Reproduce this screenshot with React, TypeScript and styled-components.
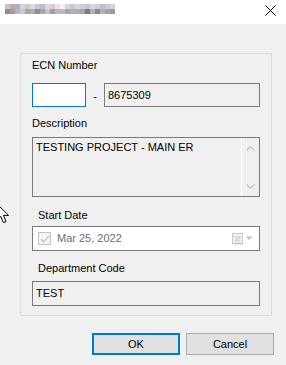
import styled, { createGlobalStyle } from 'styled-components';

const GlobalStyle = createGlobalStyle`
  html, body {
    margin: 0;
    padding: 0;
    background: #f0f0f0;
  }
  body {
    font-family: "Liberation Sans", Arial, sans-serif;
    font-size: 11px;
    color: #000;
  }
`;

const Window = styled.div`
  position: relative;
  width: 286px;
  height: 365px;
  display: flex;
  flex-direction: column;
  overflow: hidden;
  background: #f0f0f0;
`;

const TitleBar = styled.div`
  height: 24px;
  background: #fff;
  display: flex;
  align-items: flex-start;
  justify-content: space-between;
  padding: 3px 10px 0 5px;
  box-sizing: border-box;
`;

const Content = styled.div`
  padding: 29px 14px 0 20px;
`;

const GroupBox = styled.div`
  border: 1px solid #dcdcdc;
  height: 263px;
  box-sizing: border-box;
  padding: 5px 11px 0 11px;
  display: flex;
  flex-direction: column;
`;

const Label = styled.div<{ $indent?: number; $top: number }>`
  line-height: 13px;
  height: 13px;
  margin-top: ${(p) => p.$top}px;
  padding-left: ${(p) => p.$indent ?? 0}px;
  white-space: nowrap;
`;

const EcnRow = styled.div`
  display: flex;
  align-items: center;
  height: 24px;
  margin-top: 11px;
`;

const TextBox = styled.div<{ $width?: number; $height?: number; $focused?: boolean; $white?: boolean }>`
  box-sizing: border-box;
  width: ${(p) => (p.$width ? `${p.$width}px` : 'auto')};
  flex: ${(p) => (p.$width ? '0 0 auto' : '1 1 auto')};
  height: ${(p) => p.$height ?? 25}px;
  border: 1px solid ${(p) => (p.$focused ? '#0078d7' : '#7a7a7a')};
  background: ${(p) => (p.$white ? '#fff' : '#f0f0f0')};
  padding: 0 3px;
  display: flex;
  align-items: center;
  line-height: 13px;
  white-space: nowrap;
`;

const Dash = styled.span`
  width: 18px;
  text-align: center;
  line-height: 13px;
  padding-top: 2px;
`;

const TextArea = styled.div`
  box-sizing: border-box;
  height: 60px;
  margin-top: 7px;
  border: 1px solid #7a7a7a;
  background: #f0f0f0;
  display: flex;
`;

const AreaText = styled.div`
  flex: 1;
  padding: 3px 3px 0 3px;
  line-height: 13px;
  white-space: nowrap;
`;

const ScrollBar = styled.div`
  width: 17px;
  border-left: 1px solid #fff;
  display: flex;
  flex-direction: column;
  align-items: center;
  justify-content: space-between;
  padding: 8px 0 7px;
`;

const DatePicker = styled.div`
  box-sizing: border-box;
  height: 25px;
  margin-top: 4px;
  border: 1px solid #7a7a7a;
  background: #fff;
  display: flex;
  align-items: center;
  padding: 0 5px 0 5px;
`;

const CheckBox = styled.div`
  box-sizing: border-box;
  width: 13px;
  height: 13px;
  border: 1px solid #c4c4c4;
  background: #f4f4f4;
  display: flex;
  align-items: center;
  justify-content: center;
`;

const DateText = styled.span`
  margin-left: 6px;
  color: #6d6d7d;
  flex: 1;
  line-height: 13px;
`;

const Buttons = styled.div`
  display: flex;
  justify-content: flex-end;
  gap: 6px;
  padding: 17px 12px 0 0;
`;

const Button = styled.div<{ $default?: boolean }>`
  box-sizing: border-box;
  width: 88px;
  height: 22px;
  background: #e1e1e1;
  border: ${(p) => (p.$default ? '2px solid #0078d7' : '1px solid #adadad')};
  display: flex;
  align-items: center;
  justify-content: center;
  line-height: 13px;
`;

const Cursor = styled.svg`
  position: absolute;
  left: -4px;
  top: 203px;
`;

const mosaic = [
  ['#c9c3cc', '#b8a9b4', '#aeb3c4', '#d4d6da', '#c4ccd0', '#dcdcdc', '#c9c2cf', '#bfb8c9', '#ddd8de', '#d6cfd8', '#e6e2e6', '#f2f0f2', '#dad6d9', '#ccc8cf', '#d8d4d8', '#cfcbd2', '#c7c4cc', '#d9d7da', '#d2cdd5', '#c2bcc4', '#ccc8cc', '#d6d4d9'],
  ['#8f8a9c', '#a59aa8', '#b5b8bd', '#c8ccc8', '#a6a4a4', '#b5aba2', '#8e8c9c', '#aaa4b2', '#c7c0cb', '#a39aaf', '#bcb7bf', '#c9b3b8', '#a6a3ad', '#b5b2b9', '#a6b0c4', '#aaa6ae', '#7b7886', '#b4afb6', '#8f86a0', '#b7b0b8', '#a49eae', '#9d97ab'],
];

const App = () => {
  return (
    <>
      <GlobalStyle />
      <Window>
        <TitleBar>
          <svg width="110" height="11" viewBox="0 0 110 11">
            {mosaic.map((row, r) =>
              row.map((c, i) => <rect key={`${r}-${i}`} x={i * 5} y={r * 5 + 1} width="5" height="5" fill={c} />)
            )}
            <rect x="10" y="11" width="5" height="0" fill="#eee" />
          </svg>
          <svg width="11" height="11" viewBox="0 0 11 11" style={{ marginTop: 2 }}>
            <path d="M0.5 0.5 L10.5 10.5 M10.5 0.5 L0.5 10.5" stroke="#000" strokeWidth="1" />
          </svg>
        </TitleBar>
        <Content>
          <GroupBox>
            <Label $top={0}>ECN Number</Label>
            <EcnRow>
              <TextBox $width={54} $height={24} $focused $white />
              <Dash>-</Dash>
              <TextBox $height={24}>8675309</TextBox>
            </EcnRow>
            <Label $top={10}>Description</Label>
            <TextArea>
              <AreaText>TESTING PROJECT - MAIN ER</AreaText>
              <ScrollBar>
                <svg width="9" height="5" viewBox="0 0 9 5">
                  <path d="M0.5 4.5 L4.5 0.8 L8.5 4.5" fill="none" stroke="#c8c8c8" strokeWidth="1.4" />
                </svg>
                <svg width="9" height="5" viewBox="0 0 9 5">
                  <path d="M0.5 0.5 L4.5 4.2 L8.5 0.5" fill="none" stroke="#c8c8c8" strokeWidth="1.4" />
                </svg>
              </ScrollBar>
            </TextArea>
            <Label $top={12} $indent={6}>Start Date</Label>
            <DatePicker>
              <CheckBox>
                <svg width="10" height="8" viewBox="0 0 10 8">
                  <path d="M1 4 L3.8 6.8 L9 1" fill="none" stroke="#c4c4c4" strokeWidth="1.2" />
                </svg>
              </CheckBox>
              <DateText>Mar 25, 2022</DateText>
              <svg width="22" height="12" viewBox="0 0 22 12">
                <rect x="0.5" y="0.5" width="10" height="10" fill="#f2f2f2" stroke="#c8c8c8" />
                <path d="M0.5 3.5 H10.5 M3 5.5 H9 M3 7.5 H9 M3.5 3.5 V10.5 M5.5 3.5 V10.5 M7.5 3.5 V10.5" stroke="#d6d6d6" strokeWidth="1" />
                <rect x="1.5" y="11" width="10" height="1" fill="#e4e4e4" />
                <path d="M13.5 3.5 L20.5 3.5 L17 7 Z" fill="#c0c0c0" />
              </svg>
            </DatePicker>
            <Label $top={11} $indent={6}>Department Code</Label>
            <TextBox $height={25} style={{ marginTop: 6, flex: '0 0 auto' }}>TEST</TextBox>
          </GroupBox>
        </Content>
        <Buttons>
          <Button $default>OK</Button>
          <Button>Cancel</Button>
        </Buttons>
        <Cursor width="14" height="22" viewBox="0 0 14 22">
          <path d="M1 1 L1 17 L4.8 13.4 L7.4 19.6 L10 18.5 L7.4 12.4 L12.6 12.4 Z" fill="#fff" stroke="#000" strokeWidth="1" strokeLinejoin="miter" />
        </Cursor>
      </Window>
    </>
  );
};

export default App;
